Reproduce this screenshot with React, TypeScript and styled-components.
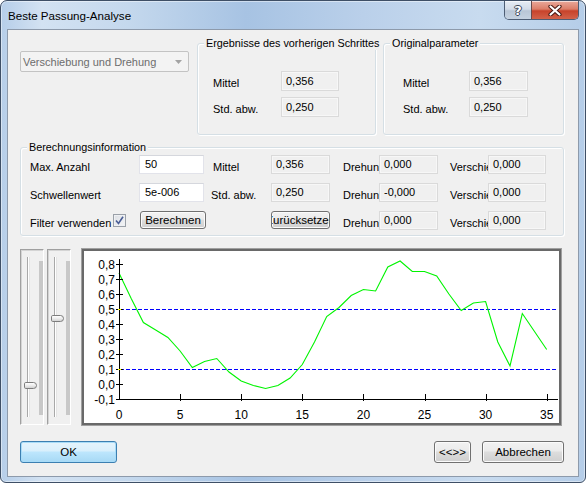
import React from "react";
import styled, { createGlobalStyle } from "styled-components";

const GlobalStyle = createGlobalStyle`
  html, body {
    margin: 0;
    padding: 0;
    background: #ffffff;
  }
  body {
    font-family: "Liberation Sans", Arial, sans-serif;
    font-size: 11px;
    color: #000000;
  }
  * {
    box-sizing: border-box;
  }
`;

// chart data, one value per step 0..35
const CURVE = [
  0.74, 0.57, 0.41, 0.36, 0.31, 0.22, 0.11, 0.15, 0.17, 0.08, 0.02, -0.01,
  -0.03, -0.01, 0.04, 0.13, 0.28, 0.45, 0.51, 0.59, 0.63, 0.62, 0.78, 0.82,
  0.75, 0.75, 0.72, 0.6, 0.49, 0.54, 0.55, 0.28, 0.12, 0.47, 0.35, 0.23
];

const Window = styled.div`
  width: 586px;
  height: 483px;
  border: 1px solid #3e4f66;
  border-radius: 7px 7px 6px 6px;
  background: linear-gradient(
    90deg,
    #b6cee9 0%,
    #d3e2f2 7%,
    #c4d8ed 22%,
    #a7c3e3 42%,
    #bad0ea 62%,
    #c8dbef 82%,
    #b5cde8 100%
  );
  box-shadow: inset 0 0 0 1px rgba(255, 255, 255, 0.45);
  display: flex;
  flex-direction: column;
  overflow: hidden;
`;

const TitleBar = styled.div`
  height: 28px;
  display: flex;
  align-items: flex-start;
  justify-content: space-between;
  padding-left: 7px;
  padding-right: 6px;
`;

const Title = styled.div`
  margin-top: 8px;
  font-size: 11.6px;
  line-height: 14px;
  color: #000000;
`;

const CaptionButtons = styled.div`
  display: flex;
  height: 19px;
  border: 1px solid #4d5d74;
  border-top: none;
  border-radius: 0 0 5px 5px;
  overflow: hidden;
`;

const CaptionButton = styled.div<{ $close?: boolean }>`
  width: ${p => (p.$close ? "47px" : "26px")};
  height: 100%;
  display: flex;
  align-items: center;
  justify-content: center;
  border-left: ${p => (p.$close ? "1px solid #6b4a4a" : "none")};
  background: ${p =>
    p.$close
      ? "linear-gradient(#e9a99b 0%, #dc7d68 45%, #c7432b 55%, #d2624a 100%)"
      : "linear-gradient(#e6ecf4 0%, #d3dce8 45%, #b9c6d6 55%, #c5d2e1 100%)"};
  box-shadow: inset 0 1px 0 rgba(255, 255, 255, 0.6);
`;

const HelpGlyph = styled.span`
  font-family: "DejaVu Sans", sans-serif;
  font-weight: bold;
  font-size: 13px;
  line-height: 13px;
  color: #ffffff;
  text-shadow: 1px 0 0 #3b4657, -1px 0 0 #3b4657, 0 1px 0 #3b4657,
    0 -1px 0 #3b4657;
`;

const Client = styled.div`
  flex: 1;
  margin: 0 6px 5px 6px;
  border: 1px solid #8d9aab;
  background: #f0f0f0;
  padding: 13px 14px 0 12px;
  display: flex;
  flex-direction: column;
`;

const TopRow = styled.div`
  display: flex;
  align-items: flex-start;
`;

const Combo = styled.div`
  width: 169px;
  height: 21px;
  margin-top: 8px;
  margin-right: 8px;
  border: 1px solid #c3c3c3;
  border-radius: 2px;
  background: #f3f3f3;
  color: #6d6d6d;
  display: flex;
  align-items: center;
  justify-content: space-between;
  padding: 0 6px 0 2px;
`;

const Group = styled.div<{ $width: number; $height: number }>`
  position: relative;
  width: ${p => p.$width}px;
  height: ${p => p.$height}px;
  border: 1px solid #d5dfe5;
  border-radius: 3px;
  box-shadow: inset 1px 1px 0 #ffffff, 1px 1px 0 #ffffff;
`;

const Legend = styled.span`
  position: absolute;
  top: -7px;
  left: 6px;
  padding: 0 2px;
  background: #f0f0f0;
  line-height: 13px;
  font-size: 10.8px;
  white-space: nowrap;
`;

const ParamGrid = styled.div<{ $pad: number; $label: number; $field: number }>`
  display: grid;
  grid-template-columns: ${p => p.$label}px ${p => p.$field}px;
  row-gap: 6px;
  padding: 27px 0 0 ${p => p.$pad}px;
`;

const Label = styled.div<{ $pad?: number; $clip?: boolean }>`
  padding-top: 6px;
  padding-left: ${p => p.$pad ?? 0}px;
  line-height: 13px;
  white-space: nowrap;
  overflow: ${p => (p.$clip ? "hidden" : "visible")};
  display: flex;
  align-items: flex-start;
`;

const ReadField = styled.div<{ $h?: number }>`
  height: ${p => p.$h ?? 20}px;
  line-height: ${p => (p.$h ?? 20) - 2}px;
  border: 1px solid #dadada;
  background: #f0f0f0;
  box-shadow: inset 0 0 0 1px #f7f7f7;
  padding-left: 4px;
  white-space: nowrap;
`;

const EditField = styled.div`
  height: 19px;
  line-height: 17px;
  border: 1px solid #e2e3ea;
  border-top-color: #d5d7dd;
  background: #ffffff;
  padding-left: 5px;
`;

const InfoGroupBody = styled.div`
  display: grid;
  grid-template-columns: 109px 65px 67px 59px 49px 59px 50px 58px;
  grid-auto-rows: 19px;
  row-gap: 9px;
  padding: 7px 0 0 9px;
`;

const CheckLabel = styled.div`
  display: flex;
  align-items: flex-start;
  gap: 2px;
  padding-top: 3px;
  white-space: nowrap;
  line-height: 13px;
`;

const CheckText = styled.span`
  padding-top: 3px;
`;

const CheckBox = styled.span`
  width: 13px;
  height: 13px;
  border: 1px solid #9aa0a8;
  background: linear-gradient(135deg, #dcdfe4 0%, #f4f5f7 100%);
  box-shadow: inset 0 0 0 1px #eef0f3;
  display: flex;
  align-items: center;
  justify-content: center;
`;

const Button = styled.div<{ $primary?: boolean; $w?: number; $h?: number }>`
  width: ${p => (p.$w ? `${p.$w}px` : "auto")};
  height: ${p => p.$h ?? 18}px;
  border: 1px solid ${p => (p.$primary ? "#3c7fb1" : "#707070")};
  border-radius: 3px;
  background: ${p =>
    p.$primary
      ? "linear-gradient(#e5f4fc 0%, #d9effc 45%, #bde6fd 50%, #a7d9f5 100%)"
      : "linear-gradient(#f2f2f2 0%, #ebebeb 45%, #dddddd 50%, #cfcfcf 100%)"};
  box-shadow: inset 0 0 0 1px ${p => (p.$primary ? "#a8dcf8" : "#fbfbfb")};
  display: flex;
  align-items: center;
  justify-content: center;
  white-space: nowrap;
  overflow: hidden;
  font-size: 11.5px;
`;

const ChartRow = styled.div`
  margin-top: 12px;
  height: 178px;
  display: flex;
  align-items: center;
`;

const SliderFrame = styled.div<{ $gap: number }>`
  width: 24px;
  height: 176px;
  margin-right: ${p => p.$gap}px;
  border: 1px solid;
  border-color: #a0a0a0 #ffffff #ffffff #a0a0a0;
  box-shadow: inset 1px 1px 0 #d4d4d4;
  display: flex;
  padding-left: 6px;
`;

const Track = styled.div`
  position: relative;
  width: 3px;
  margin: 7px 0;
  border-left: 1px solid #a8a8a8;
  background: #ffffff;
  border-right: 1px solid #e4e4e4;
`;

const Thumb = styled.div<{ $pos: number }>`
  position: absolute;
  left: -4px;
  top: ${p => p.$pos * 100}%;
  width: 13px;
  height: 7px;
  border: 1px solid #7d7d7d;
  border-radius: 2px 4px 4px 2px;
  background: linear-gradient(#ffffff 0%, #ececec 50%, #d2d2d2 100%);
`;

const Meter = styled.div`
  width: 4px;
  margin: 11px 0 9px auto;
  background: #c8c8c8;
`;

const ChartBox = styled.div`
  flex: 1;
  height: 178px;
  border: 1px solid #a0a0a0;
  box-shadow: inset 0 0 0 2px #696969;
  background: #ffffff;
  padding: 2px;
  margin-right: 2px;
`;

const ButtonRow = styled.div`
  margin-top: 15px;
  display: flex;
  align-items: center;
  gap: 11px;
`;

const Spacer = styled.div`
  flex: 1;
`;

const ChartLabel = styled.text`
  font-family: "Liberation Sans", Arial, sans-serif;
  font-size: 12px;
  fill: #000000;
`;

const xOf = (t: number) => 35 + t * 12.22;
const yOf = (v: number) => 133 - v * 150;

function Chart() {
  const yTicks = [0.8, 0.7, 0.6, 0.5, 0.4, 0.3, 0.2, 0.1, 0, -0.1];
  const xTicks = [0, 5, 10, 15, 20, 25, 30, 35];
  const points = CURVE.map((v, i) => `${xOf(i).toFixed(1)},${yOf(v).toFixed(1)}`).join(" ");
  return (
    <svg width="475" height="172" viewBox="0 0 475 172">
      {[0.5, 0.1].map(v => (
        <line
          key={"d" + v}
          x1={36}
          x2={474}
          y1={Math.round(yOf(v)) + 0.5}
          y2={Math.round(yOf(v)) + 0.5}
          stroke="#0000ff"
          strokeWidth={1}
          strokeDasharray="4 2"
          shapeRendering="crispEdges"
        />
      ))}
      <polyline points={points} fill="none" stroke="#00f400" strokeWidth={1.1} />
      <line x1={35.5} x2={35.5} y1={8} y2={148} stroke="#000" shapeRendering="crispEdges" />
      <line x1={35} x2={474} y1={148.5} y2={148.5} stroke="#000" shapeRendering="crispEdges" />
      {yTicks.map(v => (
        <g key={"y" + v}>
          <line
            x1={32}
            x2={39}
            y1={Math.round(yOf(v)) + 0.5}
            y2={Math.round(yOf(v)) + 0.5}
            stroke="#000"
            shapeRendering="crispEdges"
          />
          <ChartLabel x={31} y={yOf(v) + 4.5} textAnchor="end">
            {v.toFixed(1).replace(".", ",")}
          </ChartLabel>
        </g>
      ))}
      {[0.5, 0.1].map(v => (
        <line
          key={"m" + v}
          x1={34}
          x2={37}
          y1={Math.round(yOf(v)) + 0.5}
          y2={Math.round(yOf(v)) + 0.5}
          stroke="#ffff00"
          shapeRendering="crispEdges"
        />
      ))}
      {xTicks.map(t => (
        <g key={"x" + t}>
          {t > 0 && (
            <line
              x1={Math.round(xOf(t)) + 0.5}
              x2={Math.round(xOf(t)) + 0.5}
              y1={143}
              y2={150}
              stroke="#000"
              shapeRendering="crispEdges"
            />
          )}
          <ChartLabel x={xOf(t)} y={168} textAnchor="middle">
            {t}
          </ChartLabel>
        </g>
      ))}
    </svg>
  );
}

function Slider({ pos, gap }: { pos: number; gap: number }) {
  return (
    <SliderFrame $gap={gap}>
      <Track>
        <Thumb $pos={pos} />
      </Track>
      <Meter />
    </SliderFrame>
  );
}

export default function App() {
  return (
    <>
      <GlobalStyle />
      <Window>
        <TitleBar>
          <Title>Beste Passung-Analyse</Title>
          <CaptionButtons>
            <CaptionButton>
              <HelpGlyph>?</HelpGlyph>
            </CaptionButton>
            <CaptionButton $close>
              <svg width="14" height="11" viewBox="0 0 14 11">
                <path d="M2.5 1.5 L11.5 9.5 M11.5 1.5 L2.5 9.5" stroke="#4a1a14" strokeWidth="4.2" strokeLinecap="round" />
                <path d="M2.5 1.5 L11.5 9.5 M11.5 1.5 L2.5 9.5" stroke="#ffffff" strokeWidth="2.2" strokeLinecap="round" />
              </svg>
            </CaptionButton>
          </CaptionButtons>
        </TitleBar>

        <Client>
          <TopRow>
            <Combo>
              <span>Verschiebung und Drehung</span>
              <svg width="7" height="4" viewBox="0 0 7 4">
                <polygon points="0,0 7,0 3.5,4" fill="#a3a3a3" />
              </svg>
            </Combo>
            <Group $width={179} $height={92} style={{ marginRight: 7 }}>
              <Legend>Ergebnisse des vorherigen Schrittes</Legend>
              <ParamGrid $pad={15} $label={68} $field={58}>
                <Label>Mittel</Label>
                <ReadField>0,356</ReadField>
                <Label>Std. abw.</Label>
                <ReadField>0,250</ReadField>
              </ParamGrid>
            </Group>
            <Group $width={181} $height={92}>
              <Legend>Originalparameter</Legend>
              <ParamGrid $pad={19} $label={66} $field={59}>
                <Label>Mittel</Label>
                <ReadField>0,356</ReadField>
                <Label>Std. abw.</Label>
                <ReadField>0,250</ReadField>
              </ParamGrid>
            </Group>
          </TopRow>

          <Group $width={544} $height={89} style={{ marginTop: 12 }}>
            <Legend>Berechnungsinformation</Legend>
            <InfoGroupBody>
              <Label>Max. Anzahl</Label>
              <EditField>50</EditField>
              <Label $pad={9}>Mittel</Label>
              <ReadField $h={19}>0,356</ReadField>
              <Label $pad={13} $clip>Drehung</Label>
              <ReadField $h={19}>0,000</ReadField>
              <Label $pad={12} $clip>Verschiebung</Label>
              <ReadField $h={19}>0,000</ReadField>

              <Label>Schwellenwert</Label>
              <EditField>5e-006</EditField>
              <Label $pad={7}>Std. abw.</Label>
              <ReadField $h={19}>0,250</ReadField>
              <Label $pad={13} $clip>Drehung</Label>
              <ReadField $h={19}>-0,000</ReadField>
              <Label $pad={12} $clip>Verschiebung</Label>
              <ReadField $h={19}>0,000</ReadField>

              <CheckLabel>
                <CheckText>Filter verwenden</CheckText>
                <CheckBox>
                  <svg width="9" height="9" viewBox="0 0 9 9">
                    <path d="M1 4.5 L3.5 7.5 L8 0.8" fill="none" stroke="#4b5f96" strokeWidth="1.6" />
                  </svg>
                </CheckBox>
              </CheckLabel>
              <Button $w={66} style={{ marginLeft: 1 }}>Berechnen</Button>
              <div />
              <Button $w={59}>Zurücksetzen</Button>
              <Label $pad={13} $clip>Drehung</Label>
              <ReadField $h={19}>0,000</ReadField>
              <Label $pad={12} $clip>Verschiebung</Label>
              <ReadField $h={19}>0,000</ReadField>
            </InfoGroupBody>
          </Group>

          <ChartRow>
            <Slider pos={0.78} gap={3} />
            <Slider pos={0.365} gap={10} />
            <ChartBox>
              <Chart />
            </ChartBox>
          </ChartRow>

          <ButtonRow>
            <Button $primary $w={97} $h={22}>OK</Button>
            <Spacer />
            <Button $w={37} $h={22}>&lt;&lt;&gt;&gt;</Button>
            <Button $w={82} $h={22}>Abbrechen</Button>
          </ButtonRow>
        </Client>
      </Window>
    </>
  );
}
